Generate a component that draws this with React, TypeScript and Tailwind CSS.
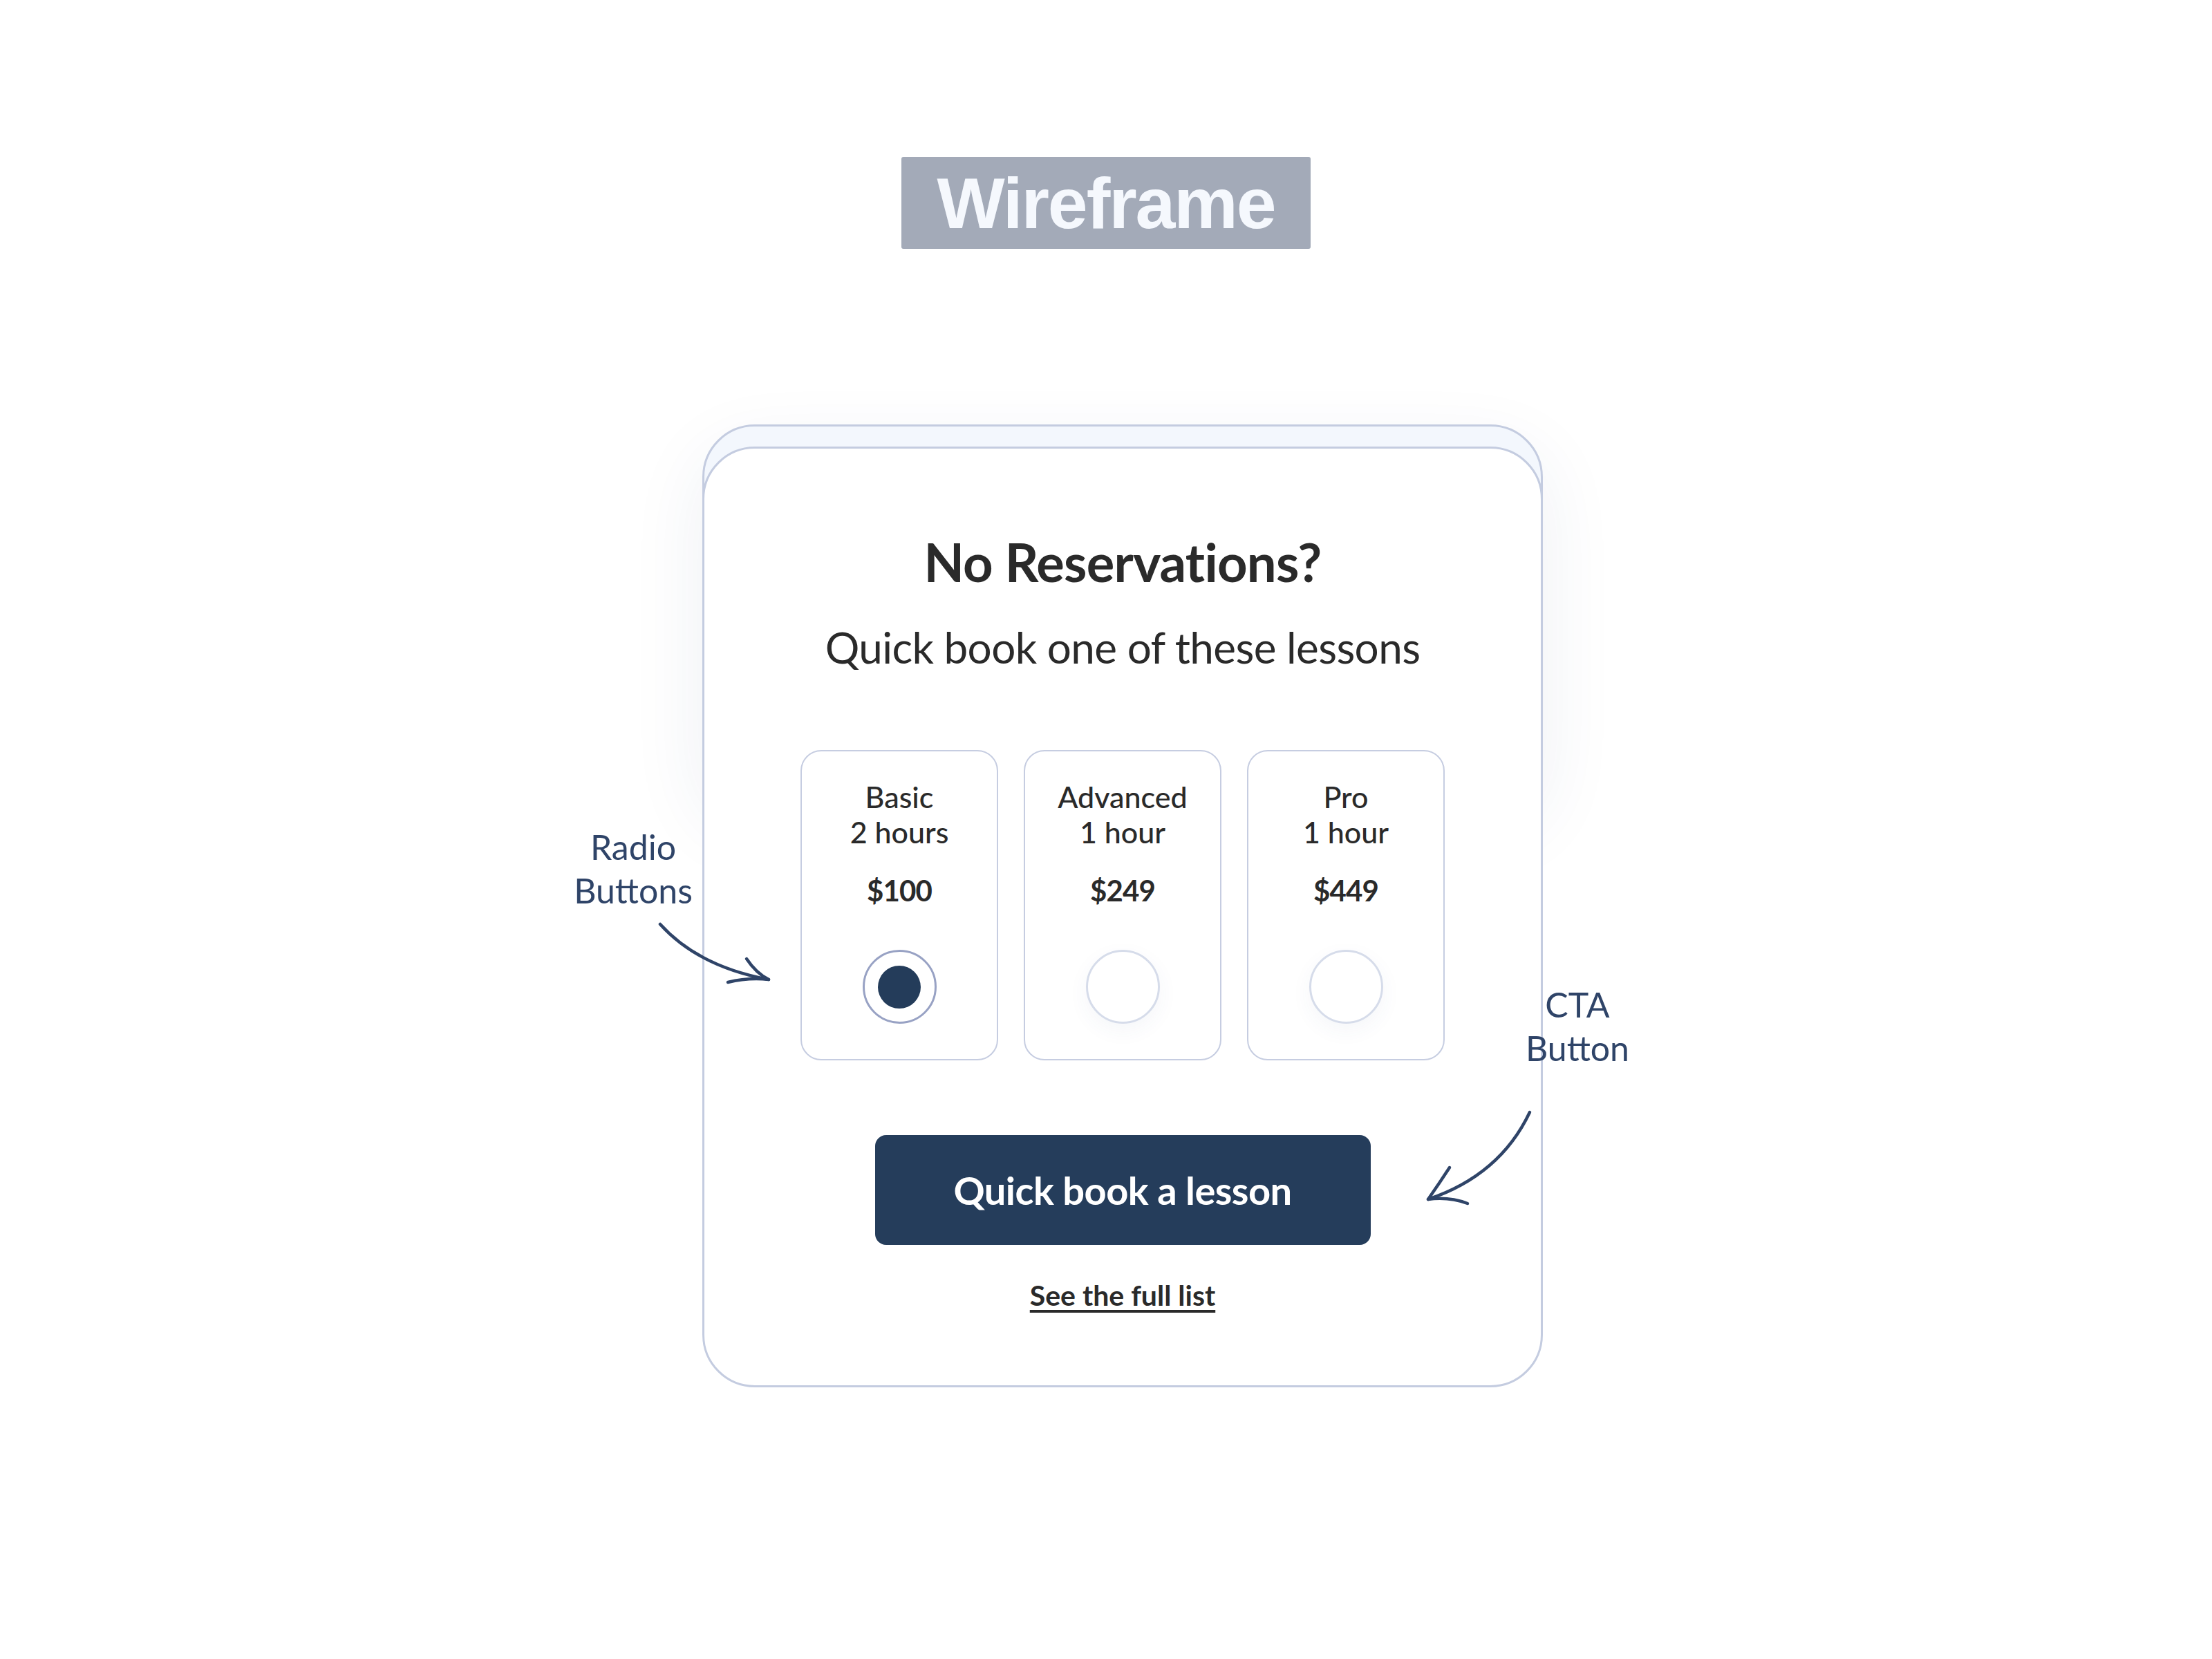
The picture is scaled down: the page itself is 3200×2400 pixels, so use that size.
const lessons = [
  { name: 'Basic', length: '2 hours', price: '$100', selected: true },
  { name: 'Advanced', length: '1 hour', price: '$249', selected: false },
  { name: 'Pro', length: '1 hour', price: '$449', selected: false },
];

function LessonOption({ name, length, price, selected }: (typeof lessons)[number]) {
  return (
    <div className="flex h-[449px] w-[286px] flex-col items-center rounded-[30px] border-2 border-[#c6cde1] bg-white pt-[40px]">
      <div className="text-center text-[43px] leading-[51px] font-medium text-[#2a2a2a]">
        <div>{name}</div>
        <div>{length}</div>
      </div>
      <div className="mt-[38px] text-[42px] leading-[42px] font-bold tracking-[-0.02em] text-[#2a2a2a]">{price}</div>
      {selected ? (
        <div className="mt-[65px] flex h-[107px] w-[107px] items-center justify-center rounded-full border-[3px] border-[#98a2c4]">
          <div className="h-[62px] w-[62px] rounded-full bg-[#243c5a]" />
        </div>
      ) : (
        <div className="mt-[65px] h-[107px] w-[107px] rounded-full border-[3px] border-[#d6dcea] shadow-[0_10px_30px_rgba(60,80,140,0.05)]" />
      )}
    </div>
  );
}

export default function App() {
  return (
    <div className="relative flex h-[2400px] w-[3200px] flex-col items-center bg-white font-['Lato',sans-serif]">
      <div className="mt-[227px] flex h-[133px] w-[592px] items-center justify-center rounded-[3px] bg-[#a3aab8]">
        <span className="font-['Liberation_Sans',sans-serif] text-[104px] leading-none font-bold tracking-[-0.02em] text-[#f5f8fd]">
          Wireframe
        </span>
      </div>

      <div className="relative mt-[254px] ml-[48px] w-[1216px] pt-[32px]">
        <div className="absolute inset-x-0 top-0 h-[542px] rounded-[76px] border-[3px] border-[#c4cce0] bg-[#f3f7fd] shadow-[0_40px_110px_rgba(40,60,120,0.08)]" />

        <div className="relative flex h-[1361px] flex-col items-center rounded-[76px] border-[3px] border-[#c4cce0] bg-white pt-[126px]">
          <h1 className="text-[76px] leading-[76px] font-bold tracking-[-0.01em] text-[#2a2a2a]">No Reservations?</h1>
          <p className="mt-[54px] text-[62px] leading-[62px] tracking-[-0.01em] text-[#2a2a2a]">
            Quick book one of these lessons
          </p>

          <div className="mt-[118px] flex gap-[37px]">
            {lessons.map((l) => (
              <LessonOption key={l.name} {...l} />
            ))}
          </div>

          <button className="mt-[108px] flex h-[159px] w-[717px] items-center justify-center rounded-[16px] bg-[#253d5b] text-[56px] font-bold tracking-[-0.01em] text-white">
            Quick book a lesson
          </button>
          <a className="mt-[52px] text-[41px] leading-[41px] font-bold text-[#2a2a2a] underline decoration-[4px] underline-offset-[6px]">
            See the full list
          </a>
        </div>
      </div>

      <div className="absolute top-[1194px] left-[816px] w-[200px] text-center text-[50px] leading-[63px] text-[#2f4468]">
        <div>Radio</div>
        <div>Buttons</div>
      </div>
      <div className="absolute top-[1422px] left-[2182px] w-[200px] text-center text-[50px] leading-[63px] text-[#2f4468]">
        <div>CTA</div>
        <div>Button</div>
      </div>

      <svg className="pointer-events-none absolute inset-0" width="3200" height="2400" fill="none" stroke="#2f4468" strokeWidth="4.5" strokeLinecap="round" strokeLinejoin="round">
        <path d="M955 1337 Q1010 1398 1112 1417" />
        <path d="M1080 1387 Q1094 1408 1112 1417 Q1082 1414 1053 1421" />
        <path d="M2213 1609 Q2170 1700 2066 1735" />
        <path d="M2097 1689 Q2082 1712 2066 1735 Q2096 1731 2123 1741" />
      </svg>
    </div>
  );
}
